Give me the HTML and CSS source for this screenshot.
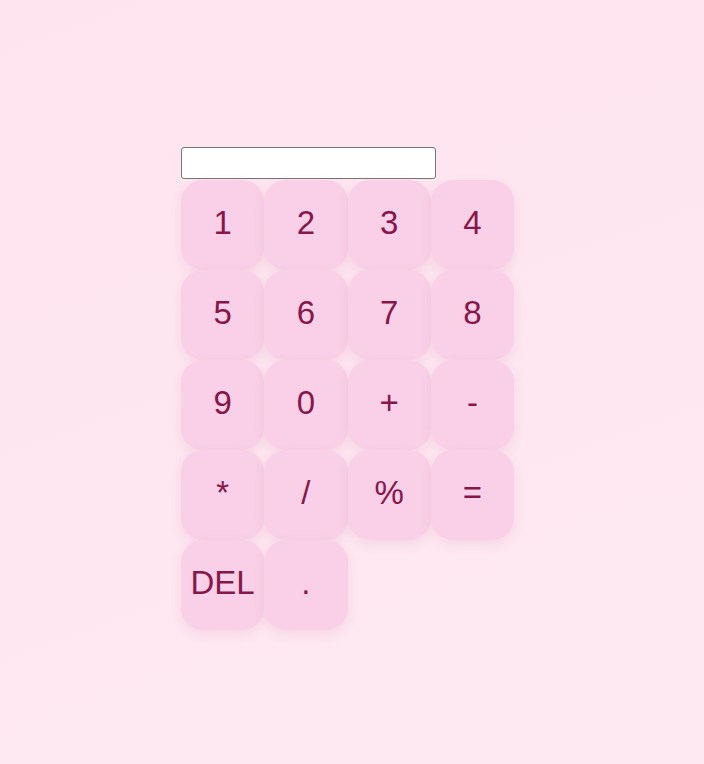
FILE: index.html
```html
<!DOCTYPE html>
<html>
<head>
<meta charset="utf-8">
<link rel="stylesheet" href="styles.css">
</head>
<body>
<div class="calc">
  <input class="display" type="text">
  <div class="keys">
    <button class="key">1</button>
    <button class="key">2</button>
    <button class="key">3</button>
    <button class="key">4</button>
    <button class="key">5</button>
    <button class="key">6</button>
    <button class="key">7</button>
    <button class="key">8</button>
    <button class="key">9</button>
    <button class="key">0</button>
    <button class="key">+</button>
    <button class="key">-</button>
    <button class="key">*</button>
    <button class="key">/</button>
    <button class="key">%</button>
    <button class="key">=</button>
    <button class="key">DEL</button>
    <button class="key">.</button>
  </div>
</div>
</body>
</html>
```
FILE: styles.css
```css
html, body {
  margin: 0;
  padding: 0;
}
body {
  min-height: 764px;
  background: linear-gradient(160deg, #fee4ef 0%, #fee9f2 100%);
  font-family: "Liberation Sans", Arial, sans-serif;
}
.calc {
  padding: 147px 0 0 181px;
  width: 334px;
}
.display {
  display: block;
  box-sizing: border-box;
  width: 255px;
  height: 32px;
  margin: 0;
  border: 1px solid #767676;
  border-radius: 3px;
  background: #fff;
}
.keys {
  display: grid;
  grid-template-columns: repeat(4, 83.25px);
  grid-auto-rows: 90px;
  margin-top: 1px;
}
.key {
  margin: 0;
  border: none;
  border-radius: 22px;
  background: #f9d0e7;
  color: #87174a;
  font-family: "Liberation Sans", Arial, sans-serif;
  font-size: 33px;
  padding: 0 0 4px 0;
  box-shadow: 0 4px 12px rgba(180, 90, 130, 0.12);
}
```
